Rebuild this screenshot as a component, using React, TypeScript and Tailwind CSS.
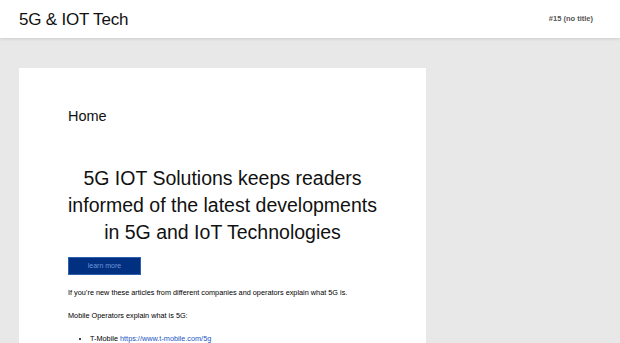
export default function App() {
  return (
    <div className="min-h-[343px] bg-[#e8e8e8] text-[#111] font-['Liberation_Sans',Arial,sans-serif]">
      <header className="relative z-10 flex h-[38px] items-center justify-between bg-white pl-[19px] pr-[27px] shadow-[0_1px_3px_rgba(0,0,0,0.12)]">
        <div className="text-[17px] leading-none tracking-[-0.2px]">5G &amp; IOT Tech</div>
        <div className="text-[7.5px] font-bold text-[#555]">#15 (no title)</div>
      </header>

      <main className="pl-[19px] pt-[30px]">
        <div className="w-[407px] bg-white px-[49px] pt-[40px] pb-10">
          <h2 className="text-[14.5px] leading-[16px]">Home</h2>

          <h1 className="mt-[41px] text-center text-[19.5px] leading-[27px]">
            5G IOT Solutions keeps readers informed of the latest developments in 5G and IoT Technologies
          </h1>

          <button className="mt-[11px] flex h-[18px] w-[73px] items-center justify-center border border-[#2f5fb0] bg-[#00307f] text-[7px] text-[#6d95d8]">
            learn more
          </button>

          <p className="mt-[12px] text-[7.3px] leading-[11px] text-black">
            If you&rsquo;re new these articles from different companies and operators explain what 5G is.
          </p>
          <p className="mt-[12px] text-[7.3px] leading-[11px] text-black">Mobile Operators explain what is 5G:</p>

          <ul className="mt-[12px] list-disc pl-[22px] text-[7.3px] leading-[11px] text-black">
            <li>
              T-Mobile <a className="text-[#1a55c4]" href="#">https://www.t-mobile.com/5g</a>
            </li>
          </ul>
        </div>
      </main>
    </div>
  );
}
